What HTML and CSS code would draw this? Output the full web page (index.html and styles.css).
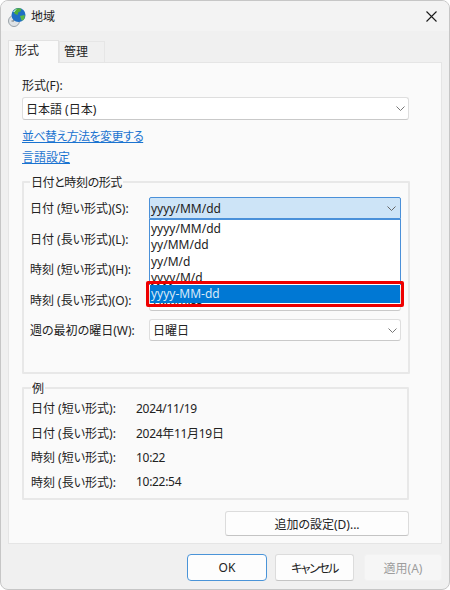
FILE: index.html
```html
<!DOCTYPE html>
<html lang="ja">
<head>
    <meta charset="UTF-8">
    <title>地域</title>
    <link rel="stylesheet" href="styles.css">
</head>
<body>
    <div class="window">
        <div class="titlebar">
            <svg class="app-icon" width="19" height="20" viewBox="0 0 19 20">
                <circle cx="6" cy="14" r="5.5" fill="#dfe3e6" stroke="#9aa2a8"/>
                <path d="M6 10.5V14H3.5" fill="none" stroke="#6d757b"/>
                <circle cx="10.5" cy="8" r="7" fill="#1f6fc4"/>
                <path d="M7 2c2-1 5-1 6.500 0l-1 2.500-2 .5-1 3-2.500-1-1.500-2z" fill="#4fae3c"/>
                <path d="M12 9l4.500-1c.5 2 0 4-1 5l-2 .5z" fill="#5dba45"/>
                <path d="M5 5c1-1.500 2-2.500 4-3-1 1-2 2-2.500 3z" fill="#bfe3f7"/>
            </svg>
            <span class="title">地域</span>
            <svg class="close" width="11" height="11" viewBox="0 0 11 11">
                <path d="M.5.5l10 10M10.500.5l-10 10" stroke="#1a1a1a" stroke-width="1.100" fill="none"/>
            </svg>
        </div>

        <div class="tabs">
            <div class="tab active">形式</div>
            <div class="tab">管理</div>
        </div>

        <div class="panel">
            <div class="field-label">形式(F):</div>
            <div class="combo wide">
                <span>日本語 (日本)</span>
                <svg class="chevron" width="9" height="5" viewBox="0 0 9 5"><path d="M.5.5l4 4 4-4" fill="none" stroke="#777"/></svg>
            </div>
            <a class="link first" href="#">並べ替え方法を変更する</a>
            <a class="link" href="#">言語設定</a>

            <fieldset class="group formats">
                <legend>日付と時刻の形式</legend>
                <div class="format-row">
                    <label>日付 (短い形式)(S):</label>
                    <div class="combo-wrap">
                        <div class="combo focused">
                            <span>yyyy/MM/dd</span>
                            <svg class="chevron" width="9" height="5" viewBox="0 0 9 5"><path d="M.5.5l4 4 4-4" fill="none" stroke="#666"/></svg>
                        </div>
                        <div class="dropdown">
                            <div class="option">yyyy/MM/dd</div>
                            <div class="option">yy/MM/dd</div>
                            <div class="option">yy/M/d</div>
                            <div class="option">yyyy/M/d</div>
                            <div class="option selected">yyyy-MM-dd</div>
                        </div>
                    </div>
                </div>
                <div class="format-row">
                    <label>日付 (長い形式)(L):</label>
                    <div class="combo"></div>
                </div>
                <div class="format-row">
                    <label>時刻 (短い形式)(H):</label>
                    <div class="combo"></div>
                </div>
                <div class="format-row">
                    <label>時刻 (長い形式)(O):</label>
                    <div class="combo"><span>H:mm:ss</span></div>
                </div>
                <div class="format-row">
                    <label>週の最初の曜日(W):</label>
                    <div class="combo">
                        <span>日曜日</span>
                        <svg class="chevron" width="9" height="5" viewBox="0 0 9 5"><path d="M.5.5l4 4 4-4" fill="none" stroke="#777"/></svg>
                    </div>
                </div>
            </fieldset>

            <fieldset class="group examples">
                <legend>例</legend>
                <div class="example-row"><span>日付 (短い形式):</span><span>2024/11/19</span></div>
                <div class="example-row"><span>日付 (長い形式):</span><span>2024年11月19日</span></div>
                <div class="example-row"><span>時刻 (短い形式):</span><span>10:22</span></div>
                <div class="example-row"><span>時刻 (長い形式):</span><span>10:22:54</span></div>
            </fieldset>

            <div class="panel-footer">
                <button class="btn more">追加の設定(D)...</button>
            </div>
        </div>

        <div class="actions">
            <button class="btn default">OK</button>
            <button class="btn cancel">キャンセル</button>
            <button class="btn disabled">適用(A)</button>
        </div>
    </div>
</body>
</html>
```

FILE: styles.css
```css
* {
    margin: 0;
    padding: 0;
    box-sizing: border-box;
}

body {
    width: 450px;
    height: 590px;
    background: #ffffff;
    overflow: hidden;
    font-family: "Noto Sans", "Noto Sans CJK JP", sans-serif;
    font-size: 12px;
    font-feature-settings: "palt";
    color: #222222;
}

.window {
    width: 450px;
    height: 590px;
    display: flex;
    flex-direction: column;
    background: #f0f0f0;
    border: 1px solid #c6c6c6;
    border-radius: 8px;
    overflow: hidden;
}

.titlebar {
    height: 30px;
    flex-shrink: 0;
    display: flex;
    align-items: center;
    padding: 0 12px 0 7px;
    background: #f3f3f3;
}

.app-icon {
    margin-top: 2px;
}

.title {
    margin-left: 4px;
    margin-top: -1px;
    font-size: 12px;
}

.close {
    margin-left: auto;
}

.tabs {
    display: flex;
    align-items: flex-end;
    height: 31px;
    flex-shrink: 0;
    padding-left: 7px;
}

.tab {
    width: 46px;
    height: 21px;
    padding-left: 4px;
    line-height: 20px;
    background: #f0f0f0;
    border: 1px solid #e6e6e6;
    border-bottom: none;
}

.tab.active {
    width: 51px;
    height: 23px;
    padding-left: 6px;
    background: #fafafa;
    border-color: #e2e2e2;
    margin-bottom: -1px;
    position: relative;
    z-index: 1;
}

.panel {
    width: 434px;
    height: 482px;
    flex-shrink: 0;
    margin-left: 7px;
    padding: 14px 0 0 13px;
    background: #fafafa;
    border: 1px solid #e5e5e5;
}

.field-label {
    height: 20px;
    line-height: 17px;
}

.combo {
    position: relative;
    height: 23px;
    display: flex;
    align-items: center;
    justify-content: space-between;
    padding: 0 3px 0 3px;
    background: #ffffff;
    border: 1px solid #dedede;
    border-bottom-color: #c9c9c9;
    border-radius: 3px;
}

.combo.wide {
    width: 387px;
}

.chevron {
    flex-shrink: 0;
    margin-left: auto;
}

.link {
    display: block;
    width: max-content;
    color: #1a73d0;
    line-height: 15px;
    margin-top: 6px;
    text-decoration: underline;
}

.link.first {
    margin-top: 9px;
    letter-spacing: -0.6px;
}

.group {
    width: 387px;
    border: 2px solid #e8e8e8;
    border-radius: 1px;
}

.group legend {
    margin-left: 0;
    padding: 2px 1px 0;
    line-height: 14px;
}

.formats {
    height: 200px;
    margin-top: 9px;
    padding: 7px 7px 0 6px;
}

.formats legend {
    letter-spacing: -0.4px;
}

.format-row {
    display: grid;
    grid-template-columns: 119px 252px;
    align-items: center;
    height: 22px;
    margin-bottom: 8.500px;
}

.format-row .combo {
    height: 22px;
}

.combo-wrap {
    position: relative;
}

.combo.focused {
    background: #cde4f7;
    border: 1px solid #4a90d9;
    border-radius: 2px 2px 0 0;
    padding-left: 1px;
    padding-right: 4px;
}

.dropdown {
    position: absolute;
    top: 22px;
    left: 0;
    width: 252px;
    height: 66px;
    padding-top: 1px;
    background: #ffffff;
    border: 1px solid #4a90d9;
    border-bottom: none;
    z-index: 5;
}

.option {
    height: 16.400px;
    line-height: 16px;
    padding-left: 1px;
    white-space: nowrap;
}

.option.selected {
    position: relative;
    height: 18px;
    margin-top: -2px;
    line-height: 17px;
    background: #0078d4;
    color: #d6e9f8;
}

.option.selected::after {
    content: "";
    position: absolute;
    inset: -4px -4px -4px -4px;
    border: 3px solid #ee0000;
    border-radius: 2px;
}

.examples {
    height: 120px;
    margin-top: 6px;
    padding: 0 0 0 7px;
}

.example-row {
    display: grid;
    grid-template-columns: 105px 1fr;
    height: 24.500px;
    align-items: center;
}

.example-row span:last-child {
    letter-spacing: -0.3px;
}

.panel-footer {
    display: flex;
    width: 387px;
    justify-content: flex-end;
    margin-top: 11px;
}

.btn {
    width: 79px;
    height: 27px;
    font-family: inherit;
    font-size: 12px;
    font-feature-settings: inherit;
    color: #222222;
    background: #fdfdfd;
    border: 1px solid #dcdcdc;
    border-bottom-color: #c4c4c4;
    border-radius: 3px;
}

.btn.more {
    width: 184px;
    height: 25px;
}

.btn.cancel {
    letter-spacing: -1.500px;
}

.actions {
    display: flex;
    gap: 8px;
    margin: 10px 0 0 186px;
}

.btn.default {
    width: 80px;
    border: 1px solid #4a94d8;
    border-radius: 4px;
}

.btn.disabled {
    width: 78px;
    margin-left: 2px;
    color: #9d9d9d;
    background: #f6f6f6;
    border-color: #f2f2f2;
}
```
